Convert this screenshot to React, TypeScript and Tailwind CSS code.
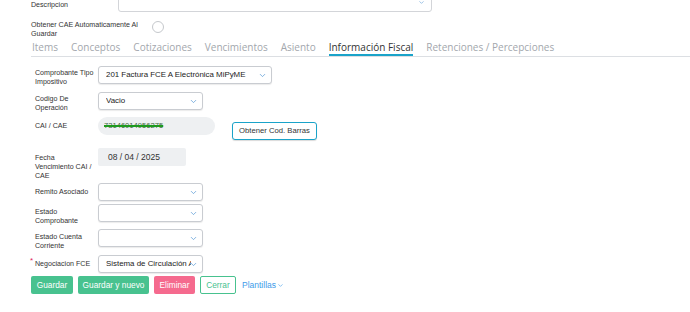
import { ChevronDown } from "lucide-react";

const label = "text-[7.1px] leading-[9px] text-[#333] font-['Liberation_Sans',Arial,sans-serif]";

const Select = ({ w, value }: { w: string; value?: string }) => (
	<div
		className={`${w} flex h-[18px] items-center rounded-[3px] border border-[#c9ccd1] bg-white pl-[7px] pr-[4px] shadow-[0_1px_1px_rgba(0,0,0,0.08)]`}
	>
		<span className="min-w-0 flex-1 overflow-hidden whitespace-nowrap text-[7.9px] text-[#222] font-['Liberation_Sans',Arial,sans-serif]">{value}</span>
		<ChevronDown className="-ml-[2px] h-[9px] w-[9px] shrink-0 text-[#5b9bd5]" strokeWidth={2} />
	</div>
);

const Row = ({ title, children, className }: { title: React.ReactNode; children: React.ReactNode; className?: string }) => (
	<div className={`flex items-start ${className ?? ""}`}>
		<div className={`w-[98px] shrink-0 pl-[35px] ${label}`}>{title}</div>
		{children}
	</div>
);

export default function App() {
	const tabs = ["Items", "Conceptos", "Cotizaciones", "Vencimientos", "Asiento", "Información Fiscal", "Retenciones / Percepciones"];
	return (
		<div className="relative h-[312px] w-[690px] overflow-hidden bg-white">
			{/* descripcion */}
			<div className="flex h-[12px] items-start">
				<div className={`w-[118px] pl-[31px] pt-[1px] ${label}`}>Descripcion</div>
				<div className="-mt-[9px] flex h-[21px] w-[314px] items-end justify-end rounded-[3px] border border-[#d3d5d9] pb-[5px] pr-[6px]">
					<ChevronDown className="h-[7px] w-[7px] text-[#5b9bd5]" strokeWidth={2} />
				</div>
			</div>
			{/* obtener cae */}
			<div className="mt-[9px] flex items-start pl-[31px]">
				<div className={`w-[121px] ${label}`}>
					Obtener CAE Automaticamente Al
					<br />
					Guardar
				</div>
				<div className="h-[12px] w-[12px] rounded-full border border-[#c5c8cc] bg-white" />
			</div>
			{/* tabs */}
			<div className="ml-[31px] mt-[1px] flex gap-[13px] border-b border-[#dcdfe3] pl-[1px] font-['Open_Sans',sans-serif] text-[10px] leading-[14px] text-[#a3a7ad]">
				{tabs.map((t) => (
					<div
						key={t}
						className={
							t === "Información Fiscal"
								? "border-b-2 border-[#1aa3c9] pb-[0px] text-[#333]"
								: "pb-[2px]"
						}
					>
						{t}
					</div>
				))}
			</div>
			{/* form */}
			<div className="mt-[12px] flex flex-col">
				<Row title={<>Comprobante Tipo<br />Impositivo</>}>
					<div className="-mt-[3px]">
						<Select w="w-[174px]" value="201 Factura FCE A Electrónica MiPyME" />
					</div>
				</Row>
				<Row title={<>Codigo De<br />Operación</>} className="mt-[8px]">
					<div className="-mt-[3px]">
						<Select w="w-[105px]" value="Vacio" />
					</div>
				</Row>
				<Row title="CAI / CAE" className="mt-[9px]">
					<div className="-mt-[5px] flex h-[18px] w-[117px] items-center rounded-full bg-[#eef0f2] pl-[6px]">
						<span className="text-[7.6px] leading-[8px] text-[#3d6b3d] line-through decoration-[#1f9a1f] decoration-2 font-['Liberation_Sans',Arial,sans-serif]">
							73146014956275
						</span>
					</div>
					<button className="ml-[17px] h-[18px] w-[85px] rounded-[3px] border border-[#1aa3c9] bg-white text-[7.7px] text-[#333] font-['Liberation_Sans',Arial,sans-serif] shadow-[0_1px_1px_rgba(0,0,0,0.15)]">
						Obtener Cod. Barras
					</button>
				</Row>
				<Row title={<>Fecha<br />Vencimiento CAI /<br />CAE</>} className="mt-[14px]">
					<div className="-mt-[6px] flex h-[18px] w-[88px] items-center rounded-[2px] bg-[#eef0f2] pl-[10px] text-[8.5px] text-[#333] font-['Liberation_Sans',Arial,sans-serif]">
						08 / 04 / 2025
					</div>
				</Row>
				<Row title="Remito Asociado" className="mt-[7px]">
					<div className="-mt-[5px]">
						<Select w="w-[105px]" />
					</div>
				</Row>
				<Row title={<>Estado<br />Comprobante</>} className="mt-[7px]">
					<div className="-mt-[4px]">
						<Select w="w-[105px]" />
					</div>
				</Row>
				<Row title={<>Estado Cuenta<br />Corriente</>} className="mt-[7px]">
					<div className="-mt-[4px]">
						<Select w="w-[105px]" />
					</div>
				</Row>
				<div className="mt-[4px] flex items-center">
					<div className={`relative w-[98px] shrink-0 pl-[31px] ${label}`}>
						<span className="absolute left-[30px] -top-[4px] text-[8px] text-[#e0245e]">*</span>
						<span className="pl-[4px]">Negociacion FCE</span>
					</div>
					<Select w="w-[105px]" value="Sistema de Circulación Abierta" />
				</div>
				<div className="mt-[3px] flex items-center gap-[5px] pl-[31px] text-[8.3px] font-['Liberation_Sans',Arial,sans-serif]">
					<button className="h-[18px] w-[42px] rounded-[2px] bg-[#48c28f] text-white">Guardar</button>
					<button className="h-[18px] w-[71px] rounded-[2px] bg-[#48c28f] text-white">Guardar y nuevo</button>
					<button className="h-[18px] w-[41px] rounded-[2px] bg-[#f56a8e] text-white">Eliminar</button>
					<button className="h-[18px] w-[36px] rounded-[2px] border border-[#48c28f] bg-white text-[#48c28f]">Cerrar</button>
					<span className="ml-[1px] flex items-center gap-[1px] text-[8.5px] text-[#3d9be9]">
						Plantillas
						<ChevronDown className="h-[7px] w-[7px]" strokeWidth={2} />
					</span>
				</div>
			</div>
		</div>
	);
}
